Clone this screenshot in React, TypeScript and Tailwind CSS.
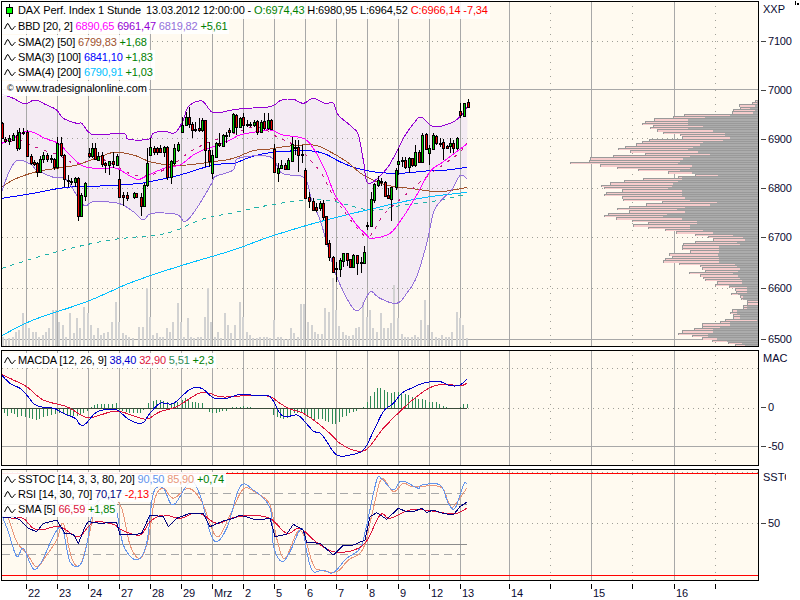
import React from 'react'

// all series below are read off 3x crops, so they are stored in crop units
type P = number[]
const pts = (list: P, xo: number, yo: number) => {
  const out: string[] = []
  for (let i = 0; i < list.length; i += 2) out.push(`${xo + list[i] / 3},${yo + list[i + 1] / 3}`)
  return out.join(' ')
}
const join2 = (a: string, b: string) => `${a} ${b}`

// catmull-rom through the read-off points, so curves don't look like straight pieces
const smooth = (points: string) => {
  const p = points.split(' ').map((s) => s.split(',').map(Number))
  const out: string[] = []
  for (let i = 0; i < p.length - 1; i++) {
    const a = p[Math.max(i - 1, 0)]
    const b = p[i]
    const c = p[i + 1]
    const d = p[Math.min(i + 2, p.length - 1)]
    for (let s = 0; s < 6; s++) {
      const t = s / 6
      const t2 = t * t
      const t3 = t2 * t
      const f = (k: number) =>
        0.5 * (2 * b[k] + (c[k] - a[k]) * t + (2 * a[k] - 5 * b[k] + 4 * c[k] - d[k]) * t2 + (3 * b[k] - a[k] - 3 * c[k] + d[k]) * t3)
      out.push(`${f(0).toFixed(1)},${f(1).toFixed(1)}`)
    }
  }
  const last = p[p.length - 1]
  out.push(`${last[0]},${last[1]}`)
  return out.join(' ')
}

const DAYS = [26, 57, 88, 119, 150, 181, 212, 243, 274, 305, 336, 367, 398, 429, 460, 509, 591, 674]
const MINOR = [550, 632, 715]
const LABELS: [number, string][] = [
  [26, '22'], [57, '23'], [88, '24'], [119, '27'], [150, '28'], [181, '29'], [212, 'Mrz'], [243, '2'], [274, '5'],
  [305, '6'], [336, '7'], [367, '8'], [398, '9'], [429, '12'], [460, '13'], [509, '14'], [591, '15'], [674, '16'],
]

// upper / lower bollinger, main pane
const upperA = pts([5,42,40,55,75,72,105,60,140,75,170,90,190,115,230,130,245,130,265,155,290,165,370,160,385,178,445,178,460,160,490,153,525,158,550,120,565,80,605,63,640,98,695,90,735,85,810,80], 0, 80)
const upperB = pts([35,60,70,58,100,70,130,55,165,70,190,70,205,105,245,140,265,165,280,240,295,310,345,272,375,225,400,175,435,125,455,112,490,140,540,130,570,110,593,80], 270, 80)
const lowerA = pts([5,335,30,270,55,240,95,255,110,270,160,292,200,300,250,375,280,365,355,370,400,395,430,420,455,400,530,403,555,425,590,385,635,310,645,290,700,270,715,235,810,230], 0, 80)
const lowerB = pts([30,275,60,285,105,295,125,360,150,420,175,505,200,590,245,680,270,688,290,650,305,635,330,655,380,670,410,640,440,590,470,490,490,400,510,365,545,330,570,287,590,295], 270, 80)
const upper = join2(upperA, upperB)
const lower = join2(lowerA, lowerB)
const band = `${upper} ${lower.split(' ').reverse().join(' ')}`

const magenta = join2(
  pts([5,190,40,175,70,157,100,157,135,175,175,190,200,215,230,245,260,262,310,265,350,265,385,285,415,298,445,285,500,262,540,255,580,225,610,210,640,200,690,180,720,165,770,155,810,150], 0, 80),
  pts([40,165,100,175,130,205,165,270,195,345,225,385,260,435,290,465,305,475,360,460,400,410,440,345,480,275,520,245,560,215,590,192], 270, 80),
)
const crimsonDash = join2(
  pts([5,190,60,180,90,195,130,210,175,225,230,252,290,235,330,248,400,285,450,285,510,260,570,215,620,190,690,165,770,140], 0, 80),
  pts([20,170,80,200,130,250,160,290,190,350,220,390,250,430,295,470,340,405,400,350,470,290,560,225,590,190], 270, 80),
)
const brown = join2(
  pts([5,320,50,295,110,275,170,265,230,255,300,230,345,217,400,225,450,245,510,255,560,255,640,245,700,235,760,212,810,207], 0, 80),
  pts([60,198,130,195,170,210,230,245,280,285,350,315,420,325,500,335,550,330,590,322], 270, 80),
)
const blue = join2(
  pts([5,355,100,340,200,322,300,318,400,312,450,305,540,285,640,255,700,250,750,232,810,218], 0, 80),
  pts([100,212,160,220,220,250,290,272,380,280,480,272,530,270,590,262], 270, 80),
)
const sky = join2(
  pts([5,767,100,720,260,665,400,605,550,555,700,510,810,470], 0, 80),
  pts([150,425,300,388,450,355,590,337], 270, 80),
)
const teal = join2(
  pts([5,565,160,518,330,480,500,460,600,420,700,398,810,375], 0, 80),
  pts([100,362,180,362,300,390,400,375,500,362,590,342], 270, 80),
)

// x, wick top, wick bottom, body top, body bottom, up
type Candle = [number, number, number, number, number, number]
const candlesA: Candle[] = [
  [6,125,178,130,175,0],[16,170,190,177,183,0],[26,165,195,175,182,1],[38,160,182,165,180,1],[50,150,212,165,205,0],[58,145,210,155,205,1],[70,145,165,155,160,0],[80,150,232,155,228,0],
  [92,222,255,228,248,0],[101,240,258,247,252,0],[110,245,290,250,275,0],[121,228,278,238,275,1],[130,215,250,225,238,1],[142,218,245,225,238,0],[152,225,250,235,238,0],[162,235,270,238,262,0],
  [172,170,268,190,262,1],[184,172,232,190,225,0],[193,222,320,225,298,0],[203,285,320,300,304,0],[213,295,315,304,306,1],[224,290,320,295,305,1],[235,292,422,295,408,0],[244,340,412,345,408,1],
  [256,305,362,310,348,1],[266,205,235,218,228,0],[277,190,235,205,228,1],[286,190,240,205,238,0],[295,215,240,228,240,1],[306,215,260,225,252,0],[316,245,280,250,254,0],[328,243,285,243,254,1],
  [338,215,265,243,252,0],[350,222,258,228,254,1],[358,270,355,298,352,0],[370,335,378,346,352,0],[380,335,362,346,354,0],[401,335,356,340,352,1],[408,338,354,340,352,0],[422,340,408,352,378,0],
  [431,310,382,315,378,1],[442,205,320,250,316,1],[451,175,226,202,224,1],[463,198,226,203,216,0],[472,200,225,205,216,0],[481,195,218,205,215,0],[492,198,230,202,215,1],[502,198,300,202,292,0],
  [513,240,312,243,292,1],[523,192,255,205,248,1],[535,185,215,192,210,1],[545,110,160,135,155,1],[557,95,135,112,134,1],[566,80,145,112,132,0],[575,125,175,132,150,0],[585,125,155,146,150,0],
  [596,115,155,145,150,0],[606,115,155,120,150,1],[615,120,260,120,210,0],[628,185,260,210,243,0],[637,210,298,225,278,1],[648,185,235,190,232,1],[658,160,200,190,195,0],[668,162,200,165,197,1],
  [678,155,190,165,168,0],[688,145,170,150,155,0],[699,100,160,103,155,1],[709,103,165,105,140,0],[720,110,145,115,140,1],[730,98,160,112,135,0],[741,120,140,133,135,0],[750,125,140,132,135,0],
  [761,120,140,125,135,1],[772,120,165,123,155,0],[782,120,160,125,155,1],[793,98,150,122,145,0],[803,98,150,120,143,1],
]
const candlesB: Candle[] = [
  [3,118,148,120,146,0],[13,192,278,208,276,0],[24,250,305,265,278,1],[34,240,268,256,265,1],[44,250,270,255,266,0],[55,235,268,240,266,1],[65,170,245,192,242,1],[75,180,225,200,204,0],
  [85,180,275,200,226,0],[97,195,250,222,226,0],[106,265,358,270,354,0],[118,335,385,350,362,0],[128,355,392,362,390,0],[138,370,395,382,390,0],[150,362,392,368,383,1],[158,360,420,368,410,0],
  [169,408,492,408,492,0],[178,480,542,490,532,0],[190,528,575,532,575,0],[199,545,605,565,568,0],[211,535,590,540,568,1],[220,518,560,520,542,1],[230,520,558,520,540,0],[241,538,565,538,560,0],
  [250,522,565,525,560,1],[262,525,585,525,548,0],[272,530,580,545,550,0],[283,498,552,517,550,1],[292,425,450,435,437,0],[303,335,442,358,438,1],[313,308,368,312,360,1],[325,288,320,300,315,1],
  [333,295,318,302,306,0],[344,302,352,306,348,0],[355,325,358,345,355,0],[364,320,422,322,356,1],[377,265,330,270,320,1],[385,205,285,244,252,1],[397,230,260,240,244,0],[406,232,268,240,262,0],
  [418,230,278,235,262,1],[427,235,260,235,255,0],[436,195,260,216,255,1],[448,210,248,216,246,0],[457,160,250,165,246,1],[469,158,210,162,206,0],[478,195,255,205,220,1],[490,160,208,166,206,1],
  [499,165,195,168,190,0],[511,175,200,188,190,0],[520,178,240,187,203,0],[530,195,205,198,203,0],[541,175,218,190,198,1],[550,180,218,190,205,0],[562,170,210,175,205,1],[571,68,115,92,106,0],
  [583,68,110,70,108,1],[593,58,82,67,80,0],
]

// x, top of bar
const volA: P = [5,770,15,778,25,775,35,770,45,755,55,750,65,700,75,730,85,745,95,755,105,755,115,770,125,765,135,755,145,745,155,690,165,690,175,725,185,735,195,770,208,700,218,760,228,715,238,745,250,680,260,700,270,735,280,765,290,745,300,765,310,760,322,755,332,725,345,665,355,725,365,760,375,765,385,770,395,775,415,740,425,740,437,625,447,710,457,765,467,760,477,770,487,770,497,745,507,755,517,725,530,670,540,725,550,770,560,715,570,770,580,775,590,770,600,770,611,710,621,625,631,725,641,770,651,755,661,775,671,700,681,735,691,760,701,735,716,665,726,710,737,755,747,765,757,775,767,775,778,770,788,770,798,770,808,775]
const volB: P = [10,720,20,770,30,770,40,778,50,778,60,745,70,760,80,770,90,672,100,672,112,725,122,735,132,755,142,762,152,762,163,685,173,695,185,595,195,690,205,738,215,755,225,765,235,768,245,765,255,745,265,740,277,665,287,710,297,690,307,745,317,755,330,700,340,745,350,745,360,730,370,615,381,715,392,762,402,770,412,770,422,772,432,765,442,770,450,720,463,660,472,735,484,755,494,770,504,775,514,765,524,770,534,770,544,755,557,695,567,715,577,735,587,775]

// y, left of pink, left of grey
const profile: [number, number, number][] = [
  [30,585,590],[36,575,590],[43,538,585],[50,540,570],[57,520,585],[64,515,578],[71,373,510],[78,338,435],[85,283,385],[92,255,385],[98,247,385],[105,280,428],[112,270,385],[118,290,460],[125,310,495],[132,360,495],[139,365,510],[146,268,490],[153,245,430],[160,228,420],[167,195,400],[174,175,385],[181,210,415],[188,255,450],[195,160,390],[202,90,370],[209,88,360],[216,30,355],[223,120,395],[230,170,390],[237,235,360],[244,325,395],[251,405,475],[258,355,365],[263,250,365],[270,192,355],[277,150,340],[284,124,335],[291,133,325],[298,185,365],[305,138,365],[312,133,365],[319,185,375],[326,188,390],[333,305,470],[340,258,450],[347,207,375],[354,170,350],[361,208,375],[368,145,320],[375,133,310],[382,168,365],[389,217,410],[396,265,410],[403,218,390],[410,265,390],[417,315,430],[424,348,460],[431,405,520],[438,445,550],[445,460,555],[452,405,530],[459,370,540],[466,365,478],[473,365,478],[480,390,478],[490,327,475],[497,335,478],[504,315,478],[511,310,478],[518,358,525],[525,420,530],[532,425,540],[539,435,535],[546,388,520],[553,420,535],[560,430,540],[567,435,545],[574,470,545],[581,465,508],[588,508,562],[595,525,560],[602,528,560],[609,513,535],[616,540,550],[623,543,550],[630,560,594],[637,562,594],[644,550,562],[651,550,562],[658,515,532],[665,510,530],[672,520,540],[679,520,540],[686,495,590],[693,480,510],[700,427,510],[707,427,480],[714,403,458],[721,367,458],[728,355,445],[735,395,445],[742,427,470],[749,455,500],[756,505,545],[763,525,555],[770,525,560],
]

// MACD pane
const macdBlue = join2(
  pts([5,90,30,115,60,130,80,150,110,182,160,190,190,205,225,220,240,238,255,238,285,205,310,195,350,195,385,222,425,235,450,205,480,175,520,175,570,133,605,130,640,158,680,160,720,148,770,152,810,155], 0, 345),
  pts([30,205,50,215,80,210,100,225,130,258,155,268,190,320,210,333,240,330,280,315,310,260,340,200,370,175,395,145,430,127,465,113,510,110,540,122,570,120,590,102], 270, 345),
)
const macdRed = join2(
  pts([5,88,40,105,80,125,130,165,200,185,260,218,300,210,350,198,400,212,440,222,480,200,530,185,590,148,620,143,660,155,700,155,760,150,810,155], 0, 345),
  pts([30,175,60,192,100,205,150,240,190,275,210,295,250,315,290,313,340,250,400,190,440,155,480,128,520,118,570,122,590,115], 270, 345),
)
const histA: P = [12,205,22,212,32,205,42,208,52,215,62,212,75,215,88,220,97,222,108,225,118,222,128,215,140,212,152,210,165,208,178,205,188,205,200,210,210,212,220,212,230,212,240,210,250,205,262,198,272,185,282,180,292,178,302,177,312,177,325,178,335,178,347,175,357,195,367,198,378,200,388,203,398,205,410,205,420,205,430,195,445,175,458,167,468,165,480,165,490,168,500,170,512,175,522,175,532,170,545,165,555,160,565,162,575,170,585,172,595,175,607,175,617,188,627,200,637,203,647,203,657,200,667,198,677,197,687,192,697,187,707,185,720,185,730,183,740,187,750,186,790,192]
const histB: P = [10,210,22,215,30,218,40,222,50,220,60,215,72,205,82,205,93,205,103,210,112,215,122,218,133,225,143,222,155,222,165,228,175,232,186,238,196,238,207,230,217,215,227,212,238,205,249,202,259,197,279,185,290,170,301,152,311,140,322,130,331,128,341,135,352,142,362,145,373,140,384,142,393,147,404,148,415,150,425,155,435,158,445,162,455,162,465,165,476,170,487,170,497,172,507,177,518,183,528,187,538,188,548,193,558,193,569,187,579,177,590,177]

// SSTOC / RSI pane
const ssBlue = join2(
  pts([5,150,25,200,50,275,70,250,100,312,125,290,150,235,175,190,190,200,210,290,240,300,260,240,280,130,310,100,345,120,370,240,410,285,440,235,460,85,490,70,520,120,570,50,600,90,640,225,680,190,720,65,760,75,810,130], 0, 465),
  pts([10,240,35,290,60,260,95,190,110,260,128,318,160,315,190,323,230,280,270,250,290,180,320,45,335,42,370,75,395,48,445,70,455,60,510,60,535,115,555,130,580,60,590,55], 270, 465),
)
const ssSalmon = join2(
  pts([5,130,25,160,50,230,80,265,110,305,140,270,170,225,190,175,215,280,240,300,265,220,290,120,330,90,365,130,390,240,420,280,445,220,465,100,490,70,520,100,565,70,605,110,650,215,690,150,730,72,770,85,810,120], 0, 465),
  pts([20,220,45,280,90,195,130,300,150,315,200,320,235,285,280,250,310,130,335,42,370,80,400,55,430,65,510,65,535,110,550,125,590,70], 270, 465),
)
const ssNavy = join2(
  pts([5,155,20,158,40,155,60,165,85,190,110,200,130,175,170,165,195,205,220,208,235,235,255,185,265,170,300,175,350,172,360,210,410,208,425,205,450,150,490,155,505,185,530,160,570,145,610,145,630,185,670,168,700,160,720,150,770,165,810,160], 0, 465),
  pts([15,215,50,208,70,178,100,195,110,232,150,235,190,270,220,240,250,240,285,225,300,155,320,143,350,163,385,130,410,140,430,140,455,130,470,142,490,135,520,145,550,150,570,125,590,112], 270, 465),
)
const ssRed = join2(
  pts([5,155,40,160,70,160,100,190,130,193,180,185,235,215,280,172,340,178,365,195,420,210,450,170,490,150,540,160,580,145,610,150,650,175,700,158,750,152,810,160], 0, 465),
  pts([50,205,90,190,140,232,200,262,280,240,330,150,360,160,420,135,480,137,550,147,590,130], 270, 465),
)

const GRID = '#a8a8a8'
const DOTS = '#a0a098'

function Dots({ y, x1 = 2, x2 = 758 }: { y: number; x1?: number; x2?: number }) {
  return <line x1={x1} x2={x2} y1={y + 0.5} y2={y + 0.5} stroke={DOTS} strokeDasharray="1 4" shapeRendering="crispEdges" />
}

function HLine({ y, x1 = 2, x2 = 758, color = GRID }: { y: number; x1?: number; x2?: number; color?: string }) {
  return <line x1={x1} x2={x2} y1={y + 0.5} y2={y + 0.5} stroke={color} shapeRendering="crispEdges" />
}

function VGrid({ y1, y2 }: { y1: number; y2: number }) {
  return (
    <g shapeRendering="crispEdges">
      {DAYS.map((x) => <line key={x} x1={x + 0.5} x2={x + 0.5} y1={y1} y2={y2} stroke={GRID} />)}
      {MINOR.map((x) => <line key={x} x1={x + 0.5} x2={x + 0.5} y1={y1 + 4} y2={y2} stroke={DOTS} strokeDasharray="1 6" />)}
    </g>
  )
}

function Line({ points, color, dash, raw }: { points: string; color: string; dash?: string; raw?: boolean }) {
  return <polyline points={raw ? points : smooth(points)} fill="none" stroke={color} strokeDasharray={dash} strokeLinejoin="round" shapeRendering="crispEdges" />
}

function Candles({ data, xo }: { data: Candle[]; xo: number }) {
  return (
    <g shapeRendering="crispEdges">
      {data.map(([x, hi, lo, top, bot, up]) => {
        const cx = Math.round(xo + x / 3)
        const t = Math.round(80 + top / 3)
        const b = Math.max(Math.round(80 + bot / 3), t + 1)
        return (
          <g key={x}>
            <line x1={cx + 0.5} x2={cx + 0.5} y1={80 + hi / 3} y2={80 + lo / 3} stroke="#000" />
            <rect x={cx - 0.5} y={t + 0.5} width={2} height={b - t} fill={up ? '#00d000' : '#e80000'} stroke="#000" />
          </g>
        )
      })}
    </g>
  )
}

function Volumes({ list, xo }: { list: P; xo: number }) {
  const bars = []
  for (let i = 0; i < list.length; i += 2) {
    const y = Math.round(80 + list[i + 1] / 3)
    bars.push(<rect key={i} x={Math.round(xo + list[i] / 3)} y={y} width={2} height={346 - y} fill="#d2d2d2" />)
  }
  return <g shapeRendering="crispEdges">{bars}</g>
}

function Profile() {
  return (
    <g shapeRendering="crispEdges">
      {profile.map(([zy, left, grey], i) => {
        const y = Math.round(90 + zy / 3)
        const next = i + 1 < profile.length ? Math.round(90 + profile[i + 1][0] / 3) : y + 2
        const h = Math.max(next - y - 1, 1)
        const x1 = Math.round(560 + left / 3)
        const x2 = Math.round(560 + grey / 3)
        return (
          <g key={zy}>
            <rect x={x1} y={y} width={758 - x1} height={1} fill="#9a9a9a" />
            <rect x={x1} y={y + 1} width={x2 - x1} height={h} fill="#f6cccc" />
            <rect x={x1} y={y + 1} width={1} height={h} fill="#9a9a9a" />
            <rect x={x2} y={y + 1} width={758 - x2} height={h} fill="#acacac" />
          </g>
        )
      })}
    </g>
  )
}

function Histogram({ list, xo }: { list: P; xo: number }) {
  const bars = []
  for (let i = 0; i < list.length; i += 2) {
    const y = 345 + list[i + 1] / 3
    const x = Math.round(xo + list[i] / 3) + 0.5
    bars.push(<line key={i} x1={x} x2={x} y1={408} y2={y} stroke="#2e8b57" />)
  }
  return <g shapeRendering="crispEdges">{bars}</g>
}

function Wave() {
  return (
    <svg width="12" height="9" viewBox="0 0 12 9" className="shrink-0">
      <path d="M0.5 7 L1.5 5 L3 2 L4 1.5 L5.5 4 L7 7 L8.5 7.5 L10 5.5 L11.5 4" fill="none" stroke="#000" />
    </svg>
  )
}

function LegendRow({ children, className = '' }: { children: React.ReactNode; className?: string }) {
  return (
    <div className={`flex items-center gap-[2px] h-[15px] w-fit pl-[2px] pr-[2px] bg-white/90 whitespace-pre text-black tracking-[-0.15px] ${className}`}>
      <Wave />
      <span>{children}</span>
    </div>
  )
}

function AxisLabel({ y, text }: { y: number; text: string }) {
  return (
    <div className="absolute left-[2px] flex items-center gap-[2px] h-[14px] -translate-y-1/2 tracking-[-0.2px]" style={{ top: y }}>
      <span className="w-[5px] h-px bg-[#444]" />
      <span className="text-[#0a0a30]">{text}</span>
    </div>
  )
}

export default function App() {
  return (
    <div
      className="w-[800px] h-[600px] bg-white overflow-hidden flex flex-col pt-px pl-px text-[11px] leading-[15px] text-black"
      style={{ fontFamily: '"Liberation Sans", Arial, sans-serif' }}
    >
      {/* Price pane */}
      <div className="flex h-[346px]">
        <div className="relative w-[758px] h-full border border-black bg-[#fffaf0] overflow-hidden">
          <svg width="756" height="344" viewBox="2 2 756 344" className="block">
            <polygon points={band} fill="#f4ebf3" />
            <VGrid y1={2} y2={346} />
            <Dots y={41} />
            <HLine y={89} />
            <Dots y={138} />
            <Dots y={188} />
            <Dots y={237} />
            <Dots y={288} />
            <HLine y={339} />
            <Volumes list={volA} xo={0} />
            <Volumes list={volB} xo={270} />
            <Profile />
            <Line points={teal} color="#20b2aa" dash="4 5" />
            <Line points={sky} color="#00bfff" />
            <Line points={blue} color="#0000ff" />
            <Line points={brown} color="#a0522d" />
            <Line points={crimsonDash} color="#c71585" dash="3 6" />
            <Line points={magenta} color="#ff00ff" />
            <Line points={upper} color="#9400d3" />
            <Line points={lower} color="#9370db" />
            <Candles data={candlesA} xo={0} />
            <Candles data={candlesB} xo={270} />
          </svg>
          <div className="absolute left-0 top-0 flex flex-col items-start">
            <div className="flex items-center h-[17px] bg-white/90 w-fit pr-[2px] whitespace-pre tracking-[-0.12px]">
              <svg width="7" height="13" viewBox="0 0 7 13" className="ml-[4px] mr-[5px] shrink-0" shapeRendering="crispEdges">
                <line x1="3.5" x2="3.5" y1="0" y2="13" stroke="#000" />
                <rect x="0.5" y="3.5" width="6" height="6" fill="#00ff00" stroke="#000" />
              </svg>
              <span className="w-[128px]">DAX Perf. Index 1 Stunde</span>
              <span>13.03.2012 12:00:00 - </span>
              <span className="text-[#008000]">O:6974,43 </span>
              <span>H:6980,95 L:6964,52 </span>
              <span className="text-[#ff0000]">C:6966,14 -7,34</span>
            </div>
            <LegendRow>BBD [20, 2] <span className="text-[#ff00ff]">6890,65</span> <span className="text-[#9400d3]">6961,47</span> <span className="text-[#9370db]">6819,82</span> <span className="text-[#008000]">+5,61</span></LegendRow>
            <LegendRow className="mt-px">SMA(2) [50] <span className="text-[#a0522d]">6799,83</span> <span className="text-[#008000]">+1,68</span></LegendRow>
            <LegendRow>SMA(3) [100] <span className="text-[#0000ff]">6841,10</span> <span className="text-[#008000]">+1,83</span></LegendRow>
            <LegendRow>SMA(4) [200] <span className="text-[#00bfff]">6790,91</span> <span className="text-[#008000]">+1,03</span></LegendRow>
            <div className="flex items-center h-[15px] mt-px w-fit pl-[5px] pr-[2px] bg-white/90 whitespace-pre tracking-[-0.1px]">
              <span className="w-[9px] text-[9px] leading-none">©</span>
              <span>www.tradesignalonline.com</span>
            </div>
          </div>
        </div>
        <div className="relative flex-1">
          <div className="absolute left-[4px] top-[1px] whitespace-pre text-[#0a0a30]">XXP</div>
          <svg width="4" height="4" viewBox="0 0 4 4" className="absolute left-[36px] top-0" shapeRendering="crispEdges">
            <path d="M0.5 0 V4 M2 1.5 V4 M3.5 1.5 V4" stroke="#000" fill="none" />
          </svg>
          {([[7100, 40], [7000, 89], [6900, 138], [6800, 187], [6700, 236], [6600, 287], [6500, 338]] as [number, number][]).map(([v, y]) => (
            <AxisLabel key={v} y={y} text={String(v)} />
          ))}
        </div>
      </div>

      {/* MACD pane */}
      <div className="flex h-[116px] mt-[3px]">
        <div className="relative w-[758px] h-full border border-black bg-[#fffaf0] overflow-hidden">
          <svg width="756" height="114" viewBox="2 351 756 114" className="block">
            <VGrid y1={351} y2={465} />
            <Dots y={368} />
            <Dots y={408} x1={468} />
            <HLine y={446} />
            <Histogram list={histA} xo={0} />
            <Histogram list={histB} xo={270} />
            <HLine y={408} x2={467} color="#3a4a3a" />
            <Line points={macdRed} color="#dc143c" />
            <Line points={macdBlue} color="#0000cd" />
          </svg>
          <div className="absolute left-0 top-[2px] flex flex-col items-start">
            <LegendRow>MACDA [12, 26, 9] <span className="text-[#0000cd]">38,40</span> <span className="text-[#dc143c]">32,90</span> <span className="text-[#2e8b57]">5,51</span> <span className="text-[#008000]">+2,3</span></LegendRow>
          </div>
        </div>
        <div className="relative flex-1">
          <div className="absolute left-[4px] top-[1px] whitespace-pre text-[#0a0a30]">MAC</div>
          <AxisLabel y={57} text="0" />
          <AxisLabel y={96} text="-50" />
        </div>
      </div>

      {/* Stochastic / RSI pane */}
      <div className="flex h-[112px] mt-[3px]">
        <div className="relative w-[758px] h-full border border-black bg-[#fffaf0] overflow-hidden">
          <svg width="756" height="110" viewBox="2 470 756 110" className="block">
            <VGrid y1={470} y2={580} />
            <Dots y={472} />
            <Dots y={523} />
            <HLine y={473} color="#ff0000" />
            <HLine y={575} color="#ff0000" />
            <line x1={2} x2={467} y1={493.5} y2={493.5} stroke={GRID} strokeDasharray="8 5" shapeRendering="crispEdges" />
            <line x1={2} x2={467} y1={554.5} y2={554.5} stroke={GRID} strokeDasharray="8 5" shapeRendering="crispEdges" />
            <HLine y={504} x2={467} color="#8c8c8c" />
            <HLine y={544} x2={467} color="#8c8c8c" />
            <Line points={ssSalmon} color="#e9967a" />
            <Line points={ssBlue} color="#6495ed" />
            <Line points={ssRed} color="#dc143c" />
            <Line points={ssNavy} color="#000080" raw />
          </svg>
          <div className="absolute left-0 top-[2px] flex flex-col items-start">
            <LegendRow>SSTOC [14, 3, 3, 80, 20] <span className="text-[#6495ed]">90,50</span> <span className="text-[#e9967a]">85,90</span> <span className="text-[#008000]">+0,74</span></LegendRow>
            <LegendRow>RSI [14, 30, 70] <span className="text-[#000080]">70,17</span> <span className="text-[#ff0000]">-2,13</span></LegendRow>
            <LegendRow>SMA [5] <span className="text-[#dc143c]">66,59</span> <span className="text-[#008000]">+1,85</span></LegendRow>
          </div>
        </div>
        <div className="relative flex-1">
          <div className="absolute left-[4px] top-[1px] w-[23px] overflow-hidden whitespace-pre text-[#0a0a30]">SSTOC</div>
          <AxisLabel y={54} text="50" />
        </div>
      </div>

      {/* Time axis */}
      <div className="relative flex-1">
        {LABELS.map(([x]) => (
          <div key={x} className="absolute top-[3px] w-px h-[5px] bg-black" style={{ left: x - 1 }} />
        ))}
        {MINOR.map((x) => (
          <div key={x} className="absolute top-[3px] w-px h-[5px] bg-black" style={{ left: x - 1 }} />
        ))}
        {LABELS.map(([x, t]) => (
          <span key={t} className="absolute top-[5px] text-[#0a0a30]" style={{ left: x + 1 }}>{t}</span>
        ))}
      </div>
    </div>
  )
}
